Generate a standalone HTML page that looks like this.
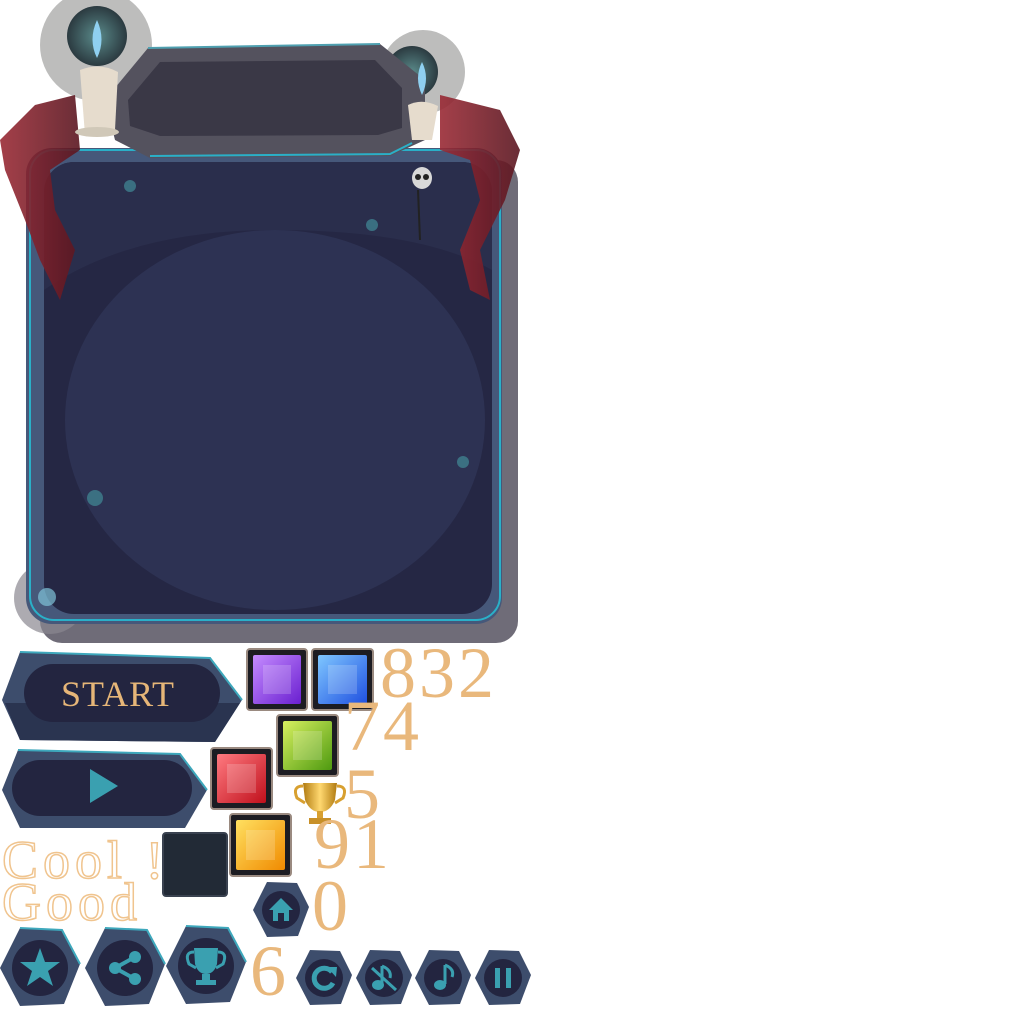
<!DOCTYPE html>
<html><head><meta charset="utf-8"><style>
html,body{margin:0;padding:0;background:#fff;width:1024px;height:1024px;overflow:hidden}
svg{position:absolute;left:0;top:0}
</style></head><body>
<svg width="1024" height="1024" viewBox="0 0 1024 1024" xmlns="http://www.w3.org/2000/svg">
<defs>
<radialGradient id="orb" cx="50%" cy="50%" r="50%"><stop offset="0" stop-color="#5a8a8a"/><stop offset="1" stop-color="#2b3a40"/></radialGradient>
<linearGradient id="rib" x1="0" y1="0" x2="1" y2="0"><stop offset="0" stop-color="#9a2a35"/><stop offset="1" stop-color="#5a1620"/></linearGradient>
<linearGradient id="gP" x1="0" y1="0" x2="1" y2="1"><stop offset="0" stop-color="#c58cff"/><stop offset="1" stop-color="#6a1fd0"/></linearGradient>
<linearGradient id="gB" x1="0" y1="0" x2="1" y2="1"><stop offset="0" stop-color="#7fc7ff"/><stop offset="1" stop-color="#1f4fe0"/></linearGradient>
<linearGradient id="gG" x1="0" y1="0" x2="1" y2="1"><stop offset="0" stop-color="#d8f060"/><stop offset="1" stop-color="#4e9a10"/></linearGradient>
<linearGradient id="gR" x1="0" y1="0" x2="1" y2="1"><stop offset="0" stop-color="#ff7a80"/><stop offset="1" stop-color="#c0101c"/></linearGradient>
<linearGradient id="gY" x1="0" y1="0" x2="1" y2="1"><stop offset="0" stop-color="#ffe060"/><stop offset="1" stop-color="#f08a00"/></linearGradient>
<linearGradient id="gold" x1="0" y1="0" x2="1" y2="0"><stop offset="0" stop-color="#b07a10"/><stop offset=".5" stop-color="#ffd870"/><stop offset="1" stop-color="#b07a10"/></linearGradient>
<clipPath id="inner"><rect x="44" y="162" width="448" height="452" rx="30"/></clipPath>
</defs>

<rect x="40" y="160" width="478" height="483" rx="22" fill="#6f6c78"/>
<circle cx="50" cy="598" r="36" fill="#8a8890" opacity=".7"/>
<rect x="26" y="148" width="476" height="476" rx="26" fill="#46587a"/>
<rect x="30" y="150" width="470" height="470" rx="24" fill="none" stroke="#2ab0c8" stroke-width="2"/>
<rect x="44" y="162" width="448" height="452" rx="30" fill="#252744"/>
<g clip-path="url(#inner)">
<path d="M44 162 L492 162 L492 270 Q420 230 275 230 Q130 230 44 290 Z" fill="#2a2e4c"/>
<ellipse cx="275" cy="420" rx="210" ry="190" fill="#2d3253"/>
</g>
<circle cx="130" cy="186" r="6" fill="#3f7f8f" opacity=".8"/>
<circle cx="372" cy="225" r="6" fill="#3f7f8f" opacity=".8"/>
<circle cx="463" cy="462" r="6" fill="#3f7f8f" opacity=".8"/>
<circle cx="95" cy="498" r="8" fill="#3f7f8f" opacity=".8"/>
<circle cx="47" cy="597" r="9" fill="#7fc3d8" opacity=".7"/>

<circle cx="96" cy="45" r="56" fill="#9a9a98" opacity=".65"/>
<circle cx="97" cy="36" r="30" fill="url(#orb)"/>
<circle cx="423" cy="72" r="42" fill="#9a9a98" opacity=".65"/>
<circle cx="412" cy="72" r="26" fill="url(#orb)"/>

<path d="M105 100 L148 48 L380 44 L425 80 L425 140 L390 156 L150 158 L115 140 Z" fill="#54525e"/>
<path d="M128 100 L160 62 L375 60 L402 88 L402 128 L378 135 L160 136 L130 126 Z" fill="#3a3846"/>
<path d="M150 156 L390 154 L412 143" stroke="#2ab0c8" stroke-width="2" fill="none"/>
<path d="M148 48 L380 44" stroke="#4fa0b0" stroke-width="2" fill="none"/>

<path d="M35 105 L75 95 L80 150 L50 170 L55 210 L75 250 L60 300 L40 260 L25 220 L5 170 L0 140 Z" fill="url(#rib)" opacity=".9"/>
<path d="M440 95 L500 110 L520 150 L505 200 L480 250 L490 300 L470 290 L460 250 L480 200 L470 160 L440 150 Z" fill="url(#rib)" opacity=".9"/>
<path d="M80 70 Q100 62 118 72 L115 130 L85 135 Z" fill="#e6dccd"/>
<ellipse cx="97" cy="132" rx="22" ry="5" fill="#d0c8b8"/>
<path d="M97 20 Q88 40 97 58 Q106 40 97 20Z" fill="#8fd0f0"/>
<path d="M408 105 Q422 98 438 106 L432 140 L412 140 Z" fill="#e6dccd"/>
<path d="M422 62 Q414 78 422 95 Q430 78 422 62Z" fill="#8fd0f0"/>
<ellipse cx="422" cy="178" rx="10" ry="11" fill="#d8d8d8"/>
<circle cx="418" cy="177" r="3" fill="#222"/><circle cx="426" cy="177" r="3" fill="#222"/>
<line x1="418" y1="190" x2="420" y2="240" stroke="#222" stroke-width="2"/>

<path d="M20 652 L210 658 L242 700 L215 742 L20 740 L2 700 Z" fill="#3d4d6c"/>
<path d="M5 703 L20 740 L215 742 L240 703" fill="#2a3450"/>
<path d="M20 652 L210 658 L242 700" stroke="#3ea8bc" stroke-width="2" fill="none"/>
<rect x="24" y="664" width="196" height="58" rx="29" fill="#232540"/>
<text x="118" y="706" text-anchor="middle" font-family="Liberation Serif,serif" font-size="36" fill="#e6b678" letter-spacing="1">START</text>
<path d="M18 750 L180 754 L207 790 L185 828 L20 828 L2 790 Z" fill="#3d4d6c"/>
<path d="M18 750 L180 754 L207 790" stroke="#3ea8bc" stroke-width="2" fill="none"/>
<rect x="12" y="760" width="180" height="56" rx="28" fill="#232540"/>
<path d="M90 769 L118 786 L90 803 Z" fill="#3aa0b0"/>

<g stroke="#9a8a80" stroke-width="2">
<rect x="247" y="649" width="60" height="61" rx="3" fill="#1c1c22"/>
<rect x="312" y="649" width="61" height="61" rx="3" fill="#1c1c22"/>
<rect x="277" y="715" width="61" height="61" rx="3" fill="#1c1c22"/>
<rect x="211" y="748" width="61" height="61" rx="3" fill="#1c1c22"/>
<rect x="230" y="814" width="61" height="62" rx="3" fill="#1c1c22"/>
</g>
<rect x="253" y="655" width="48" height="49" rx="2" fill="url(#gP)"/>
<rect x="318" y="655" width="49" height="49" rx="2" fill="url(#gB)"/>
<rect x="283" y="721" width="49" height="49" rx="2" fill="url(#gG)"/>
<rect x="217" y="754" width="49" height="49" rx="2" fill="url(#gR)"/>
<rect x="236" y="820" width="49" height="50" rx="2" fill="url(#gY)"/>
<g fill="#ffffff" opacity=".18">
<rect x="263" y="665" width="28" height="29"/><rect x="328" y="665" width="29" height="29"/>
<rect x="293" y="731" width="29" height="29"/><rect x="227" y="764" width="29" height="29"/>
<rect x="246" y="830" width="29" height="30"/>
</g>
<rect x="163" y="833" width="64" height="63" rx="3" fill="#222a36" stroke="#3a4250" stroke-width="2"/>

<path d="M303 783 L337 783 L335 800 Q330 812 320 812 Q310 812 305 800 Z" fill="url(#gold)"/>
<path d="M303 786 Q292 786 297 798 L305 803" stroke="#d8a030" stroke-width="3" fill="none"/>
<path d="M337 786 Q348 786 343 798 L335 803" stroke="#d8a030" stroke-width="3" fill="none"/>
<rect x="317" y="811" width="6" height="8" fill="#d8a030"/>
<rect x="309" y="818" width="22" height="6" fill="#c89028"/>

<g font-family="Liberation Serif,serif" fill="#e9b87c" font-size="72" letter-spacing="3">
<text x="380" y="697">832</text>
<text x="344" y="750">74</text>
<text x="344" y="818">5</text>
<text x="314" y="868">91</text>
<text x="312" y="930">0</text>
<text x="250" y="995">6</text>
</g>
<g font-family="Liberation Serif,serif" fill="#fff" stroke="#f0c48e" stroke-width="1.5" font-size="54" letter-spacing="5">
<text x="2" y="878">Cool !</text>
<text x="2" y="920">Good</text>
</g>

<g>
<g transform="translate(40,968)"><path d="M-20 -40 L22 -38 L40 -4 L24 36 L-20 38 L-40 0 Z" fill="#3d4d6c"/><path d="M-20 -40 L22 -38 L40 -4" stroke="#3ea8bc" stroke-width="2" fill="none"/><circle r="28" fill="#232540"/><path d="M0 -20 L5 -6 L20 -6 L8 3 L13 18 L0 9 L-13 18 L-8 3 L-20 -6 L-5 -6Z" fill="#3aa0b0"/></g>
<g transform="translate(125,968)"><path d="M-20 -40 L22 -38 L40 -4 L24 36 L-20 38 L-40 0 Z" fill="#3d4d6c"/><path d="M-20 -40 L22 -38 L40 -4" stroke="#3ea8bc" stroke-width="2" fill="none"/><circle r="28" fill="#232540"/><g stroke="#3aa0b0" stroke-width="4"><line x1="-10" y1="0" x2="10" y2="-11"/><line x1="-10" y1="0" x2="10" y2="11"/></g><g fill="#3aa0b0"><circle cx="-10" cy="0" r="6"/><circle cx="10" cy="-11" r="6"/><circle cx="10" cy="11" r="6"/></g></g>
<g transform="translate(206,966)"><path d="M-20 -40 L22 -38 L40 -4 L24 36 L-20 38 L-40 0 Z" fill="#3d4d6c"/><path d="M-20 -40 L22 -38 L40 -4" stroke="#3ea8bc" stroke-width="2" fill="none"/><circle r="28" fill="#232540"/><path d="M-12 -18 L12 -18 L11 -2 Q8 8 0 8 Q-8 8 -11 -2Z M-4 8 L4 8 L4 14 L10 14 L10 19 L-10 19 L-10 14 L-4 14Z" fill="#3aa0b0"/><path d="M-12 -14 Q-22 -14 -17 -2 L-10 2 M12 -14 Q22 -14 17 -2 L10 2" stroke="#3aa0b0" stroke-width="3" fill="none"/></g>
<g transform="translate(281,910)"><path d="M-14 -28 L16 -27 L28 -3 L17 26 L-14 27 L-28 0 Z" fill="#3d4d6c"/><circle r="19" fill="#232540"/><path d="M0 -12 L-12 0 L-8 0 L-8 11 L8 11 L8 0 L12 0Z" fill="#3aa0b0"/><rect x="-3" y="3" width="6" height="8" fill="#232540"/></g>
<g transform="translate(324,978)"><path d="M-14 -28 L16 -27 L28 -3 L17 26 L-14 27 L-28 0 Z" fill="#3d4d6c"/><circle r="19" fill="#232540"/><path d="M8 -6 A10 10 0 1 0 9 5" stroke="#3aa0b0" stroke-width="5" fill="none"/><path d="M3 -11 L13 -11 L12 -1Z" fill="#3aa0b0"/></g>
<g transform="translate(384,978)"><path d="M-14 -28 L16 -27 L28 -3 L17 26 L-14 27 L-28 0 Z" fill="#3d4d6c"/><circle r="19" fill="#232540"/><path d="M-2 -12 L-2 6" stroke="#3aa0b0" stroke-width="3"/><ellipse cx="-6" cy="7" rx="6" ry="5" fill="#3aa0b0"/><path d="M-2 -12 Q8 -8 6 0" stroke="#3aa0b0" stroke-width="3" fill="none"/><line x1="-12" y1="-10" x2="12" y2="12" stroke="#3aa0b0" stroke-width="3"/></g>
<g transform="translate(443,978)"><path d="M-14 -28 L16 -27 L28 -3 L17 26 L-14 27 L-28 0 Z" fill="#3d4d6c"/><circle r="19" fill="#232540"/><path d="M2 -13 L2 6" stroke="#3aa0b0" stroke-width="3"/><ellipse cx="-3" cy="7" rx="6" ry="5" fill="#3aa0b0"/><path d="M2 -13 Q12 -9 9 -1" stroke="#3aa0b0" stroke-width="3" fill="none"/></g>
<g transform="translate(503,978)"><path d="M-14 -28 L16 -27 L28 -3 L17 26 L-14 27 L-28 0 Z" fill="#3d4d6c"/><circle r="19" fill="#232540"/><rect x="-8" y="-10" width="5" height="20" fill="#3aa0b0"/><rect x="3" y="-10" width="5" height="20" fill="#3aa0b0"/></g>
</g>
</svg>
</body></html>
